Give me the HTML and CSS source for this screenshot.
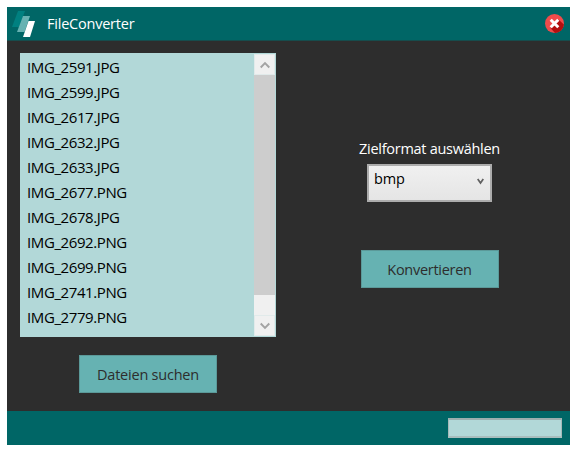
FILE: index.html
```html
<!DOCTYPE html>
<html lang="de">
<head>
<meta charset="utf-8">
<title>FileConverter</title>
<link rel="stylesheet" href="styles.css">
</head>
<body>
<div class="window">
  <header class="titlebar">
    <svg class="logo" width="24" height="26" viewBox="0 0 24 26"><path fill="#008080" d="M6 0H13L7 16H0z"/><path fill="#66b2b2" d="M11 5H18L12.500 21H5z"/><path fill="#fff" d="M16.500 10H23L18 26H11z"/></svg>
    <h1 class="title"><span>FileConverter</span></h1>
    <button class="close" aria-label="Schließen"><svg width="19" height="19" viewBox="0 0 19 19"><circle cx="9.500" cy="9.500" r="9.500" fill="#ef4b4b"/><path fill="#b30f0f" d="M13.500 5.500L18.900 10.500A9.500 9.500 0 0 1 10 19L5.500 14z"/><path d="M5.700 5.700l7.600 7.600M13.300 5.700l-7.600 7.600" stroke="#fff" stroke-width="3"/></svg></button>
  </header>
  <main class="content">
    <section class="source">
      <div class="listbox">
        <ul class="files">
          <li>IMG_2591.JPG</li>
          <li>IMG_2599.JPG</li>
          <li>IMG_2617.JPG</li>
          <li>IMG_2632.JPG</li>
          <li>IMG_2633.JPG</li>
          <li>IMG_2677.PNG</li>
          <li>IMG_2678.JPG</li>
          <li>IMG_2692.PNG</li>
          <li>IMG_2699.PNG</li>
          <li>IMG_2741.PNG</li>
          <li>IMG_2779.PNG</li>
        </ul>
        <div class="scrollbar">
          <div class="arrow"><svg width="10" height="8" viewBox="0 0 10 8"><path d="M.7 6.500L5 2.200l4.300 4.300" fill="none" stroke="#a3a3a3" stroke-width="1.900"/></svg></div>
          <div class="thumb"></div>
          <div class="track"></div>
          <div class="arrow"><svg width="10" height="8" viewBox="0 0 10 8"><path d="M.7 1.500L5 5.800l4.300-4.300" fill="none" stroke="#a3a3a3" stroke-width="1.900"/></svg></div>
        </div>
      </div>
      <button class="button search"><span>Dateien suchen</span></button>
    </section>
    <section class="target">
      <label class="label">Zielformat auswählen</label>
      <div class="select"><span>bmp</span><svg width="7" height="7" viewBox="0 0 7 7"><path d="M.7 1l2.800 4L6.300 1" fill="none" stroke="#606060" stroke-width="1.700"/></svg></div>
      <button class="button convert"><span>Konvertieren</span></button>
    </section>
  </main>
  <footer class="statusbar"><div class="progress"></div></footer>
</div>
</body>
</html>
```
FILE: styles.css
```css
* { box-sizing: border-box; }
body { margin: 0; padding: 7px; background: #fff; font: 14.5px/25px "Open Sans", "Noto Sans", sans-serif; }
button { font: inherit; padding: 0; border: 0; }
.window { width: 563px; height: 438px; display: flex; flex-direction: column; background: #2d2d2d; }
.titlebar { height: 34px; display: flex; align-items: center; background: #006666; border-bottom: 1px solid #164c4c; padding: 0 6px 0 5px; }
.logo { margin-top: 1px; }
.title { margin: 0 0 0 11px; flex: 1; font-size: 14.5px; font-weight: 400; color: #fff; letter-spacing: -.22px; }
.close { width: 19px; height: 19px; background: none; }
.close svg { display: block; }
.content { flex: 1; display: flex; }
.source { width: 269px; padding: 12px 0 0 13px; }
.listbox { height: 284px; display: flex; background: #b2d8d8; padding: 1px; }
.files { list-style: none; margin: 0; padding: 1px 0 0 6px; flex: 1; color: #000; font-size: 15px; letter-spacing: -.4px; }
.files li { height: 25px; }
.scrollbar { width: 21px; display: flex; flex-direction: column; background: #f0f0f0; }
.arrow { height: 21px; display: flex; align-items: center; justify-content: center; border: 1px solid #e1eaea; }
.thumb { height: 220px; background: #cdcdcd; }
.track { flex: 1; }
.button { display: block; width: 138px; height: 38px; background: #66b2b2; border: 1px solid #5b9999; color: #2d2d2d; text-align: center; }
.search { margin: 18px 0 0 59px; letter-spacing: -.22px; }
.target { flex: 1; display: flex; flex-direction: column; align-items: center; padding: 95px 0 0 13px; }
.label { color: #fff; letter-spacing: -.28px; white-space: nowrap; }
.select { width: 125px; height: 38px; margin-top: 3px; padding: 0 6px 0 5px; display: flex; justify-content: space-between; border: 2px solid #acacac; background: linear-gradient(#f0f0f0, #e5e5e5); color: #000; letter-spacing: -.2px; }
.select svg { margin-top: 12px; }
.convert { margin-top: 48px; letter-spacing: -.28px; }
.statusbar { height: 34px; display: flex; justify-content: flex-end; padding: 7px 8px 0 0; background: #006666; }
.progress { width: 114px; height: 20px; background: #b2d8d8; border: 1px solid #a8b8b8; border-top: 2px solid #9baeae; border-bottom: 2px solid #a8bebe; }
```
